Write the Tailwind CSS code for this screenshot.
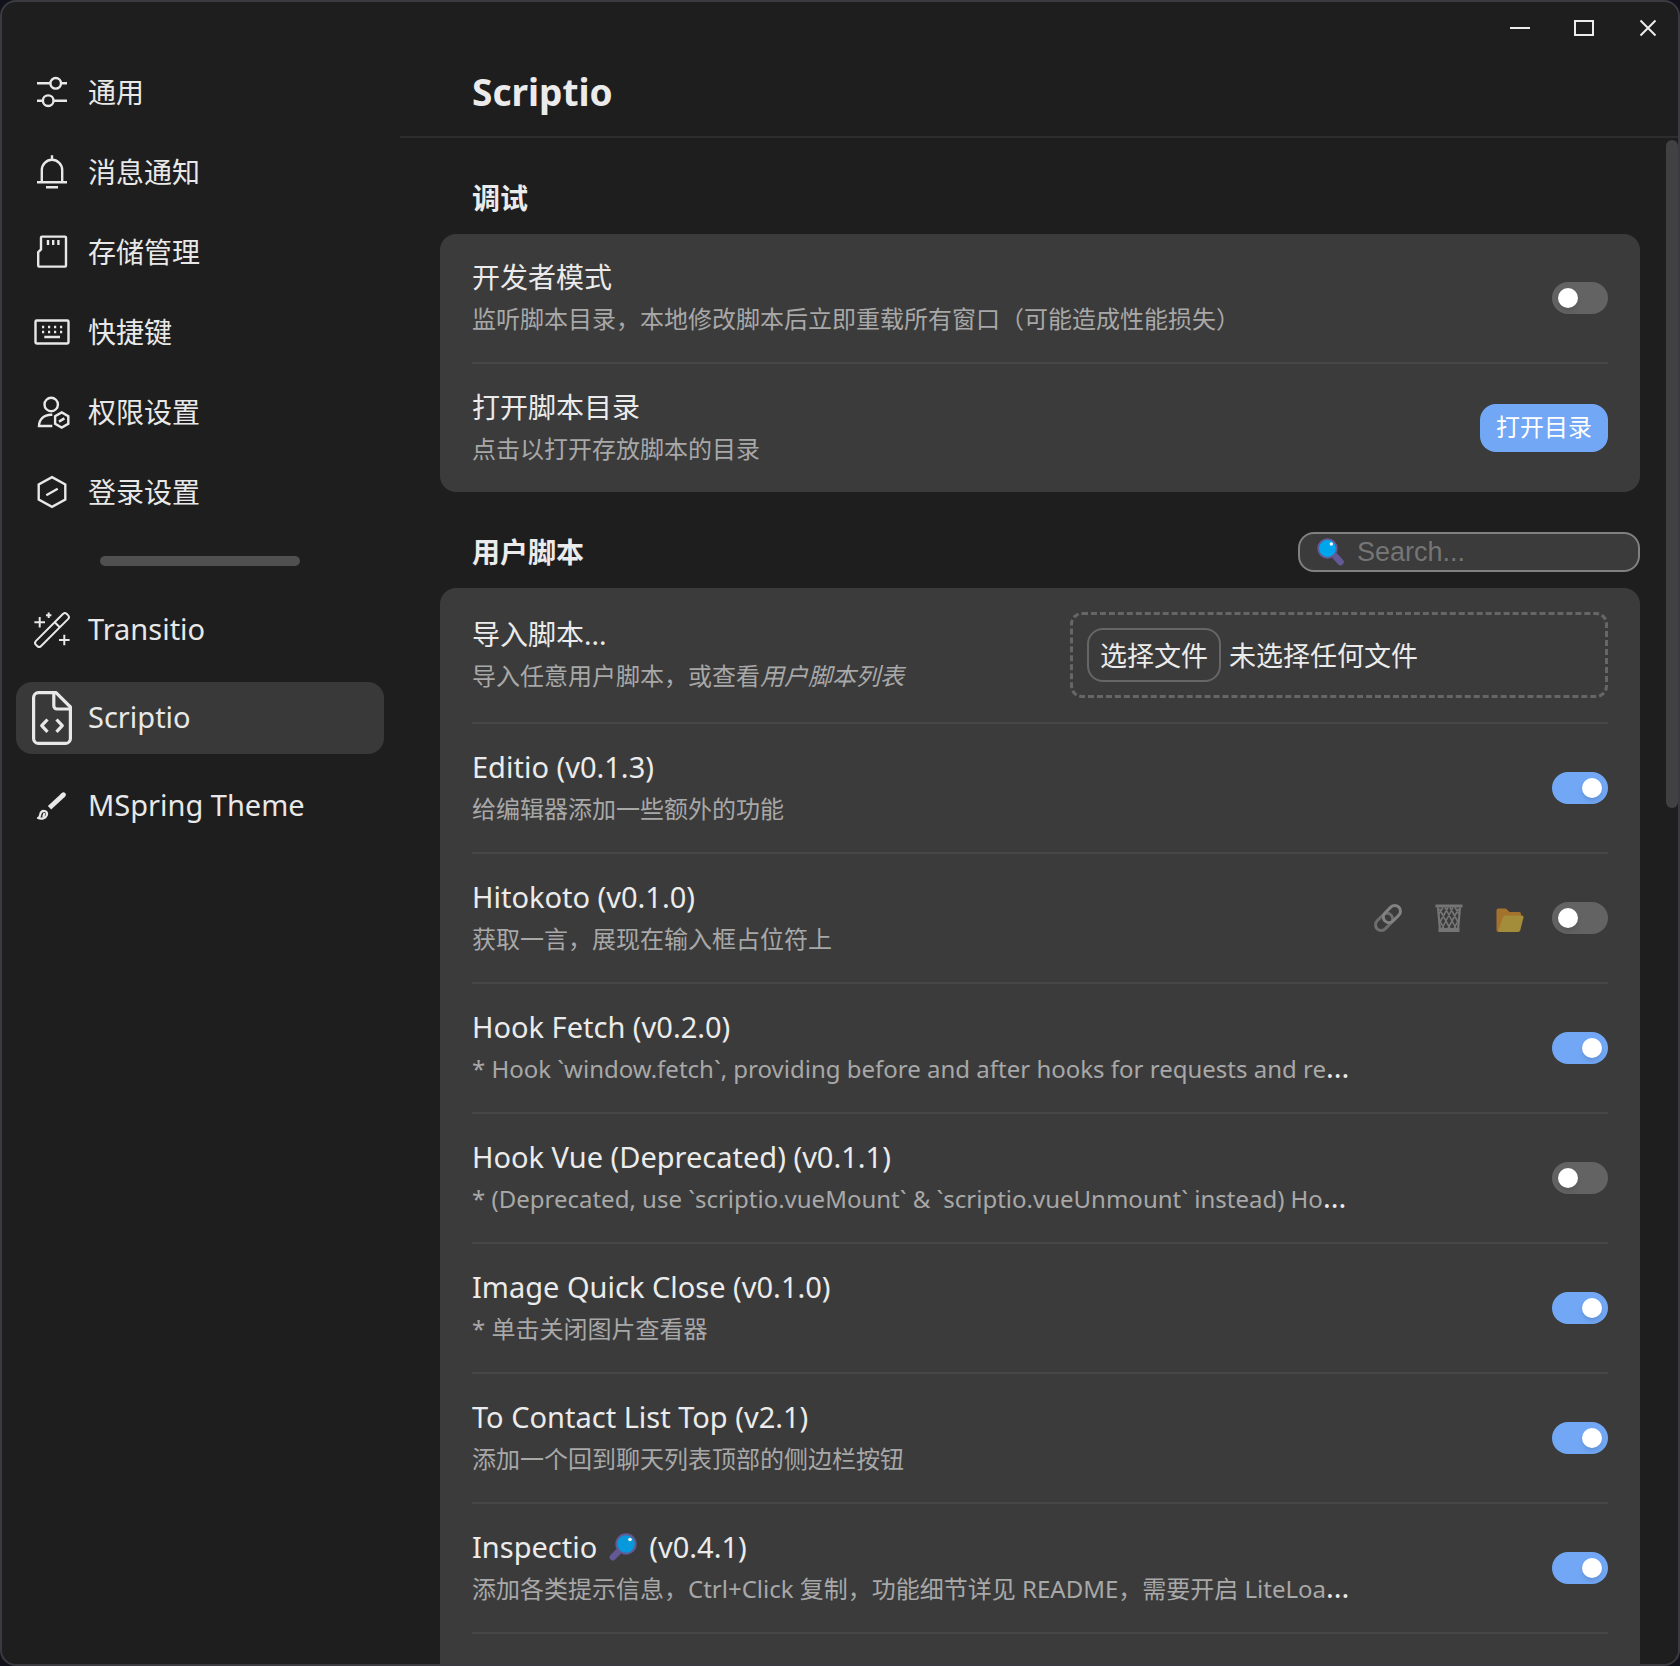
<!DOCTYPE html>
<html lang="zh-CN">
<head>
<meta charset="utf-8">
<meta name="viewport" content="width=device-width, initial-scale=1">
<title>Scriptio</title>
<script src="https://cdn.jsdelivr.net/npm/@tailwindcss/browser@4"></script>
</head>
<body class="h-screen overflow-hidden bg-[#12121c] font-['Noto_Sans','Noto_Sans_CJK_SC',sans-serif] text-[#ebebeb]">
<div class="relative flex h-full overflow-hidden rounded-2xl border-2 border-[#3b3a40] bg-[#1e1e1e]">

  <!-- Sidebar -->
  <nav class="flex w-[398px] shrink-0 flex-col pt-[54px] pr-4 pl-3.5 text-[28px] leading-10 text-[#e8e8e8]" aria-label="设置">
    <div class="flex flex-col gap-2">
      <a href="#general" class="flex h-[72px] items-center gap-4 rounded-2xl pl-4">
        <svg class="mx-0.5 size-9 shrink-0" viewBox="0 0 36 36" fill="none" stroke="currentColor" stroke-width="2.4"><path d="M3 9.3H16M27.5 9.3H33M3 26.7H8.5M20 26.7H33"/><circle cx="21.7" cy="9.3" r="5.3"/><circle cx="14.2" cy="26.7" r="5.3"/></svg>
        <span>通用</span></a>
      <a href="#notify" class="flex h-[72px] items-center gap-4 rounded-2xl pl-4">
        <svg class="mx-0.5 size-9 shrink-0" viewBox="0 0 36 36" fill="none" stroke="currentColor" stroke-width="2.4"><path d="M7.8 28V16a10.2 10.2 0 0 1 20.4 0V28M18 1.3V6M3 28.3H33M12 33.2H24"/></svg>
        <span>消息通知</span></a>
      <a href="#storage" class="flex h-[72px] items-center gap-4 rounded-2xl pl-4">
        <svg class="mx-0.5 size-9 shrink-0" viewBox="0 0 36 36" fill="none" stroke="currentColor" stroke-width="2.4"><path d="M8 2.6H31a1 1 0 0 1 1 1V31.6a1 1 0 0 1-1 1H5.2a1 1 0 0 1-1-1V18.2L7 15.4V3.6a1 1 0 0 1 1-1ZM14 6v5M19.2 6v5M24.4 6v5"/></svg>
        <span>存储管理</span></a>
      <a href="#shortcut" class="flex h-[72px] items-center gap-4 rounded-2xl pl-4">
        <svg class="mx-0.5 size-9 shrink-0" viewBox="0 0 36 36" fill="none" stroke="currentColor" stroke-width="2.4"><rect x="1.5" y="6.5" width="33" height="23" rx="1.2"/><path d="M8 13h2.2M14 13h2.2M20 13h2.2M26 13h2.2M8 18h2.2M14 18h2.2M20 18h2.2M26 18h2.2M10.3 23H26"/></svg>
        <span>快捷键</span></a>
      <a href="#permission" class="flex h-[72px] items-center gap-4 rounded-2xl pl-4">
        <svg class="mx-0.5 size-9 shrink-0" viewBox="0 0 36 36" fill="none" stroke="currentColor" stroke-width="2.4"><circle cx="17.2" cy="10.5" r="6.7"/><path d="M18.3 20.7H17C10 20.7 5 25.5 5 32H18.3M27.7 18.4l6.6 3.8v7.6l-6.6 3.8-6.6-3.8v-7.6ZM25 27.6l5.4-3.2"/></svg>
        <span>权限设置</span></a>
      <a href="#login" class="flex h-[72px] items-center gap-4 rounded-2xl pl-4">
        <svg class="mx-0.5 size-9 shrink-0" viewBox="0 0 36 36" fill="none" stroke="currentColor" stroke-width="2.4"><path d="M18 3.1l13.3 7.4v15L18 32.9 4.7 25.5v-15ZM12.3 21.2l11.4-6.4"/></svg>
        <span>登录设置</span></a>
    </div>
    <hr class="mx-auto my-7 h-2.5 w-[200px] rounded-full border-0 bg-[#505050]">
    <div class="flex flex-col gap-4 text-[29px]">
      <a href="#transitio" class="flex h-[72px] items-center gap-4 rounded-2xl pl-4">
        <svg class="mx-0.5 size-9 shrink-0" viewBox="0 0 36 36" fill="none" stroke="currentColor" stroke-width="2"><g transform="rotate(-45 18 18)"><rect x="-3.8" y="14.4" width="43.6" height="7.2" rx="2.8"/><path d="M25.4 14.4v7.2"/></g><path d="M5.7 5v10.6M.4 10.3H11M14.7 .6V6M12 3.3h5.4M30.3 22.7v10.6M25 28h10.6"/></svg>
        <span class="pb-0.5">Transitio</span></a>
      <a href="#scriptio" aria-current="page" class="flex h-[72px] items-center gap-4 rounded-2xl bg-[#393939] pl-4">
        <svg class="h-[54px] w-10 shrink-0" viewBox="0 0 40 54" fill="none" stroke="currentColor" stroke-width="3.2" stroke-linejoin="round"><path d="M6.5 1.6H24L38.4 16V47.4a5 5 0 0 1-5 5H6.5a5 5 0 0 1-4.900-5V6.500a5 5 0 0 1 4.900-4.900Z"/><path d="M21.8 1.5V14.8a3.2 3.2 0 0 0 3.2 3.2H38.5"/><path d="M15.5 28.5L9.7 34.700l5.800 6.200M24.500 28.500l5.800 6.200-5.800 6.200"/></svg>
        <span class="pb-0.5">Scriptio</span></a>
      <a href="#mspring" class="flex h-[72px] items-center gap-4 rounded-2xl pl-4">
        <svg class="mx-0.5 size-9 shrink-0" viewBox="0 0 36 36" fill="none" stroke="currentColor"><path d="M15.500 19.800L29 7.200" stroke-width="4.800"/><path d="M28.900 7.300l.600-.600" stroke-width="4.800" stroke-linecap="round"/><path d="M4 30c1.600-.4 1.900-1.600 2.200-3.400.5-2.500 2.200-3.900 4.200-3.600 2.200.3 3.100 2 2.500 4-.9 2.900-4.600 4.400-8.900 3ZM10.600 25l-1.500 4" stroke-width="2.200" stroke-linejoin="round"/></svg>
        <span class="pb-0.5">MSpring Theme</span></a>
    </div>
  </nav>

  <!-- Main pane -->
  <main class="flex min-w-0 flex-1 flex-col">
    <div class="-mr-0.5 flex h-[52px] shrink-0 items-center justify-end">
      <button type="button" aria-label="最小化" class="flex h-full w-16 items-center justify-center"><svg class="size-5" viewBox="0 0 20 20" stroke="#ececec" stroke-width="2"><path d="M0 10H20"/></svg></button>
      <button type="button" aria-label="最大化" class="flex h-full w-16 items-center justify-center"><svg class="size-5" viewBox="0 0 20 20" fill="none" stroke="#ececec" stroke-width="2"><path d="M1 3H19V17H1Z"/></svg></button>
      <button type="button" aria-label="关闭" class="flex h-full w-16 items-center justify-center"><svg class="size-5" viewBox="0 0 20 20" stroke="#ececec" stroke-width="2"><path d="M2.5 2.5L17.5 17.5M17.5 2.5L2.5 17.5"/></svg></button>
    </div>
    <header class="flex h-[84px] shrink-0 items-center border-b-2 border-[#2d2d2d] pb-1.5 pl-[72px]">
      <h1 class="text-[37px] leading-[52px] font-bold">Scriptio</h1>
    </header>

    <div class="relative flex min-h-0 flex-1 flex-col overflow-hidden pr-[38px] pl-10">
      <div class="absolute top-0.5 right-0 h-[668px] w-3 rounded-full bg-[#414141]"></div>

      <h2 class="mt-10 mb-4 shrink-0 pl-8 text-[28px] leading-10 font-bold">调试</h2>
      <section class="shrink-0 divide-y-2 divide-[#464646] rounded-2xl bg-[#3b3b3b] px-8">
        <div class="flex h-[130px] items-center justify-between">
          <label for="dev"><span class="block text-[28px] leading-[42px]">开发者模式</span><span class="block text-2xl leading-[42px] text-[#a8a8a8]">监听脚本目录，本地修改脚本后立即重载所有窗口（可能造成性能损失）</span></label>
          <input id="dev" type="checkbox" class="h-8 w-14 shrink-0 appearance-none rounded-full bg-[#636363] p-1.5 before:block before:size-5 before:rounded-full before:bg-white before:shadow-md checked:bg-[#71a7f5] checked:before:translate-x-6">
        </div>
        <div class="flex h-32 items-center justify-between">
          <div><div class="text-[28px] leading-[42px]">打开脚本目录</div><div class="text-2xl leading-[42px] text-[#a8a8a8]">点击以打开存放脚本的目录</div></div>
          <button type="button" class="h-12 shrink-0 rounded-2xl bg-[#71a7f5] px-4 pb-0.5 text-2xl text-white">打开目录</button>
        </div>
      </section>

      <div class="mt-10 mb-4 flex h-10 shrink-0 items-center justify-between pl-8">
        <h2 class="text-[28px] leading-10 font-bold">用户脚本</h2>
        <label class="flex h-10 w-[342px] items-center gap-3 rounded-2xl border-2 border-[#808080] bg-[#3b3b3b] px-[17px]">
          <svg class="size-7 shrink-0" viewBox="0 0 28 28"><path d="M18.5 18.5L23.5 24" stroke="#635994" stroke-width="6.5" stroke-linecap="round"/><circle cx="10.5" cy="10.5" r="9.3" fill="#00a6ed" stroke="#635994" stroke-width="1.8"/><circle cx="14.3" cy="6" r="1.7" fill="#fff"/></svg>
          <input type="search" placeholder="Search..." aria-label="Search" class="min-w-0 flex-1 appearance-none bg-transparent font-['Liberation_Sans',Arial,sans-serif] text-[27px] leading-9 outline-none placeholder:text-[#757575]">
        </label>
      </div>

      <section class="flex-1 divide-y-2 divide-[#464646] rounded-t-2xl bg-[#3b3b3b] px-8">
        <div class="flex h-[136px] items-center justify-between">
          <div><div class="text-[28px] leading-[42px]">导入脚本...</div><div class="text-2xl leading-[42px] text-[#a8a8a8]">导入任意用户脚本，或查看<a href="#list" class="italic">用户脚本列表</a></div></div>
          <div class="flex h-[86px] w-[538px] shrink-0 items-center gap-2 rounded-xl border-3 border-dashed border-[#666] px-3.5 text-[27px]">
            <button type="button" class="h-[54px] rounded-2xl border-2 border-[#666] px-[11px] pt-0.5 leading-9">选择文件</button>
            <span class="pt-0.5">未选择任何文件</span>
          </div>
        </div>
        <div class="flex h-[130px] items-center justify-between">
          <label for="editio"><span class="block text-[29px] leading-[42px]">Editio (v0.1.3)</span><span class="block text-2xl leading-[42px] text-[#a8a8a8]">给编辑器添加一些额外的功能</span></label>
          <input id="editio" type="checkbox" checked class="h-8 w-14 shrink-0 appearance-none rounded-full bg-[#636363] p-1.5 before:block before:size-5 before:rounded-full before:bg-white before:shadow-md checked:bg-[#71a7f5] checked:before:translate-x-6">
        </div>
        <div class="flex h-[130px] items-center justify-between">
          <label for="hitokoto"><span class="block text-[29px] leading-[42px]">Hitokoto (v0.1.0)</span><span class="block text-2xl leading-[42px] text-[#a8a8a8]">获取一言，展现在输入框占位符上</span></label>
          <div class="flex items-center gap-[33px]">
            <button type="button" aria-label="链接"><svg class="size-7" viewBox="0 0 28 28" fill="none" stroke-width="3"><g transform="rotate(-45 14 14)"><rect x="-1.3" y="8.3" width="19.6" height="11.4" rx="5.7" stroke="#6e6e6e"/><rect x="9.700" y="8.300" width="19.600" height="11.400" rx="5.700" stroke="#828282"/></g></svg></button>
            <button type="button" aria-label="删除"><svg class="size-7" viewBox="0 0 28 28" fill="none" stroke="#757575"><path d="M.5 2H27.5" stroke-width="3"/><path d="M3 3.5L5 26M25 3.5L23 26" stroke-width="2.2"/><path d="M3.5 26H24.5" stroke-width="4"/><path d="M4 10L8 3.5M5 18L13 3.500M7 24.500L18 3.500M13 24.500L23.500 5M19 24.500L24 15M24 10L20 3.500M23 18L15 3.500M21 24.500L10 3.500M15 24.500L4.500 5M9 24.500L4 15" stroke-width="1.600"/></svg></button>
            <div class="flex items-center gap-7">
              <button type="button" aria-label="打开目录"><svg class="size-7" viewBox="0 0 28 28"><path d="M.5 6.5a2 2 0 0 1 2-2H9a2 2 0 0 1 1.500.6L13.500 8H23a2 2 0 0 1 2 2V20L5 28H2.500a2 2 0 0 1-2-2Z" fill="#a3732e"/><path d="M7 13.300a2.300 2.300 0 0 1 2.200-1.700H26a1.500 1.500 0 0 1 1.500 2L24.300 26.300a2.300 2.300 0 0 1-2.200 1.700H3.800a1.500 1.500 0 0 1-1.400-2Z" fill="#a38c3a"/></svg></button>
              <input id="hitokoto" type="checkbox" class="h-8 w-14 shrink-0 appearance-none rounded-full bg-[#636363] p-1.5 before:block before:size-5 before:rounded-full before:bg-white before:shadow-md checked:bg-[#71a7f5] checked:before:translate-x-6">
            </div>
          </div>
        </div>
        <div class="flex h-[130px] items-center justify-between">
          <label for="fetch"><span class="block text-[29px] leading-[42px]">Hook Fetch (v0.2.0)</span><span class="flex text-2xl leading-[42px] text-[#a8a8a8]">* Hook `window.fetch`, providing before and after hooks for requests and re<span class="text-[29px] leading-[38px] text-[#ebebeb]">...</span></span></label>
          <input id="fetch" type="checkbox" checked class="h-8 w-14 shrink-0 appearance-none rounded-full bg-[#636363] p-1.5 before:block before:size-5 before:rounded-full before:bg-white before:shadow-md checked:bg-[#71a7f5] checked:before:translate-x-6">
        </div>
        <div class="flex h-[130px] items-center justify-between">
          <label for="vue"><span class="block text-[29px] leading-[42px]">Hook Vue (Deprecated) (v0.1.1)</span><span class="flex text-2xl leading-[42px] text-[#a8a8a8]">* (Deprecated, use `scriptio.vueMount` &amp; `scriptio.vueUnmount` instead) Ho<span class="text-[29px] leading-[38px] text-[#ebebeb]">...</span></span></label>
          <input id="vue" type="checkbox" class="h-8 w-14 shrink-0 appearance-none rounded-full bg-[#636363] p-1.5 before:block before:size-5 before:rounded-full before:bg-white before:shadow-md checked:bg-[#71a7f5] checked:before:translate-x-6">
        </div>
        <div class="flex h-[130px] items-center justify-between">
          <label for="image"><span class="block text-[29px] leading-[42px]">Image Quick Close (v0.1.0)</span><span class="block text-2xl leading-[42px] text-[#a8a8a8]">* 单击关闭图片查看器</span></label>
          <input id="image" type="checkbox" checked class="h-8 w-14 shrink-0 appearance-none rounded-full bg-[#636363] p-1.5 before:block before:size-5 before:rounded-full before:bg-white before:shadow-md checked:bg-[#71a7f5] checked:before:translate-x-6">
        </div>
        <div class="flex h-[130px] items-center justify-between">
          <label for="contact"><span class="block text-[29px] leading-[42px]">To Contact List Top (v2.1)</span><span class="block text-2xl leading-[42px] text-[#a8a8a8]">添加一个回到聊天列表顶部的侧边栏按钮</span></label>
          <input id="contact" type="checkbox" checked class="h-8 w-14 shrink-0 appearance-none rounded-full bg-[#636363] p-1.5 before:block before:size-5 before:rounded-full before:bg-white before:shadow-md checked:bg-[#71a7f5] checked:before:translate-x-6">
        </div>
        <div class="flex h-[130px] items-center justify-between">
          <label for="inspectio"><span class="flex items-center text-[29px] leading-[42px]">Inspectio<svg class="mx-3 size-7" viewBox="0 0 28 28"><path d="M9 19L3.8 24.2" stroke="#635994" stroke-width="6.5" stroke-linecap="round"/><circle cx="17" cy="11" r="9.7" fill="#0699dc" stroke="#635994" stroke-width="2"/><circle cx="21" cy="6.5" r="1.8" fill="#fff"/></svg>(v0.4.1)</span><span class="flex text-2xl leading-[42px] text-[#a8a8a8]">添加各类提示信息，Ctrl+Click 复制，功能细节详见 README，需要开启 LiteLoa<span class="text-[29px] leading-[38px] text-[#ebebeb]">...</span></span></label>
          <input id="inspectio" type="checkbox" checked class="h-8 w-14 shrink-0 appearance-none rounded-full bg-[#636363] p-1.5 before:block before:size-5 before:rounded-full before:bg-white before:shadow-md checked:bg-[#71a7f5] checked:before:translate-x-6">
        </div>
        <div class="h-8"></div>
      </section>
    </div>
  </main>
</div>
</body>
</html>
